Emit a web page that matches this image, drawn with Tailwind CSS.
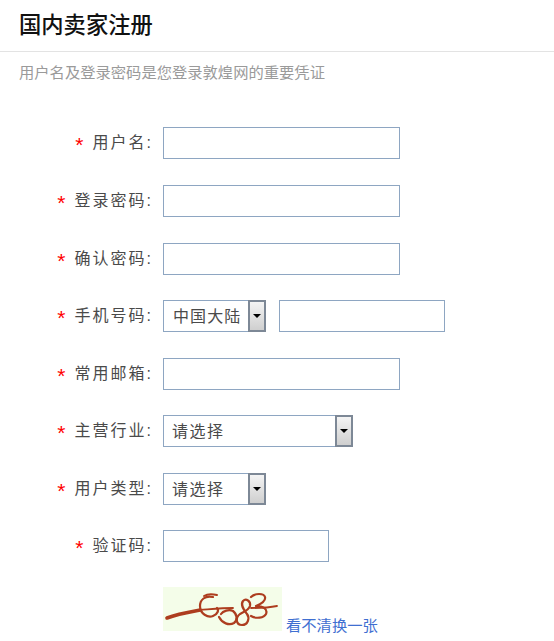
<!DOCTYPE html>
<html lang="zh-CN">
<head>
<meta charset="UTF-8">
<title>国内卖家注册</title>
<script src="https://cdn.jsdelivr.net/npm/@tailwindcss/browser@4"></script>
</head>
<body class="bg-white overflow-hidden font-['Liberation_Sans','Noto_Sans_CJK_SC',sans-serif]">
<div class="w-[554px] h-[641px] overflow-hidden">
  <!-- 标题 -->
  <div class="pl-[19px] pt-[10px] h-[52px] border-b border-[#e3e3e3]">
    <h1 class="text-[22.3px] leading-[32px] font-medium text-[#111]">国内卖家注册</h1>
  </div>
  <p class="pl-[19px] pt-[10px] text-[15.3px] leading-[22px] text-[#9a9a9a]">用户名及登录密码是您登录敦煌网的重要凭证</p>

  <form class="mt-[43.45px] flex flex-col gap-[25.55px]">
    <div class="flex items-center h-[32px]">
      <label class="w-[153px] text-right text-[16px] tracking-[2px] text-[#4a4a4a]"><span class="text-[#f00] text-[21px] leading-none align-[-4px] mr-[7px]">*</span>用户名:</label>
      <input class="ml-[10px] w-[237px] h-[32px] bg-white border border-[#8ea6c2]">
    </div>
    <div class="flex items-center h-[32px]">
      <label class="w-[153px] text-right text-[16px] tracking-[2px] text-[#4a4a4a]"><span class="text-[#f00] text-[21px] leading-none align-[-4px] mr-[7px]">*</span>登录密码:</label>
      <input type="password" class="ml-[10px] w-[237px] h-[32px] bg-white border border-[#8ea6c2]">
    </div>
    <div class="flex items-center h-[32px]">
      <label class="w-[153px] text-right text-[16px] tracking-[2px] text-[#4a4a4a]"><span class="text-[#f00] text-[21px] leading-none align-[-4px] mr-[7px]">*</span>确认密码:</label>
      <input type="password" class="ml-[10px] w-[237px] h-[32px] bg-white border border-[#8ea6c2]">
    </div>
    <div class="flex items-center h-[32px]">
      <label class="w-[153px] text-right text-[16px] tracking-[2px] text-[#4a4a4a]"><span class="text-[#f00] text-[21px] leading-none align-[-4px] mr-[7px]">*</span>手机号码:</label>
      <div class="relative ml-[10px] w-[103px] h-[32px] border border-[#8ea6c2] flex items-center pl-[9px] pt-[2px] text-[16px] tracking-[1.1px] text-[#4a4a4a]">
        中国大陆
        <span class="absolute right-[-1px] top-[-1px] w-[18px] h-[32px] border-2 border-[#7d8896] bg-gradient-to-b from-[#f4f4f4] to-[#cfcfcf] flex items-center justify-center">
          <span class="w-0 h-0 border-x-[4px] border-x-transparent border-t-[4px] border-t-black"></span>
        </span>
      </div>
      <input class="ml-[13px] w-[166px] h-[32px] bg-white border border-[#8ea6c2]">
    </div>
    <div class="flex items-center h-[32px]">
      <label class="w-[153px] text-right text-[16px] tracking-[2px] text-[#4a4a4a]"><span class="text-[#f00] text-[21px] leading-none align-[-4px] mr-[7px]">*</span>常用邮箱:</label>
      <input class="ml-[10px] w-[237px] h-[32px] bg-white border border-[#8ea6c2]">
    </div>
    <div class="flex items-center h-[32px]">
      <label class="w-[153px] text-right text-[16px] tracking-[2px] text-[#4a4a4a]"><span class="text-[#f00] text-[21px] leading-none align-[-4px] mr-[7px]">*</span>主营行业:</label>
      <div class="relative ml-[10px] w-[190px] h-[32px] border border-[#8ea6c2] flex items-center pl-[8px] pt-[2px] text-[16px] tracking-[1.5px] text-[#4a4a4a]">
        请选择
        <span class="absolute right-[-1px] top-[-1px] w-[18px] h-[32px] border-2 border-[#7d8896] bg-gradient-to-b from-[#f4f4f4] to-[#cfcfcf] flex items-center justify-center">
          <span class="w-0 h-0 border-x-[4px] border-x-transparent border-t-[4px] border-t-black"></span>
        </span>
      </div>
    </div>
    <div class="flex items-center h-[32px]">
      <label class="w-[153px] text-right text-[16px] tracking-[2px] text-[#4a4a4a]"><span class="text-[#f00] text-[21px] leading-none align-[-4px] mr-[7px]">*</span>用户类型:</label>
      <div class="relative ml-[10px] w-[103px] h-[32px] border border-[#8ea6c2] flex items-center pl-[8px] pt-[2px] text-[16px] tracking-[1.5px] text-[#4a4a4a]">
        请选择
        <span class="absolute right-[-1px] top-[-1px] w-[18px] h-[32px] border-2 border-[#7d8896] bg-gradient-to-b from-[#f4f4f4] to-[#cfcfcf] flex items-center justify-center">
          <span class="w-0 h-0 border-x-[4px] border-x-transparent border-t-[4px] border-t-black"></span>
        </span>
      </div>
    </div>
    <div class="flex items-center h-[32px]">
      <label class="w-[153px] text-right text-[16px] tracking-[2px] text-[#4a4a4a]"><span class="text-[#f00] text-[21px] leading-none align-[-4px] mr-[7px]">*</span>验证码:</label>
      <input class="ml-[10px] w-[166px] h-[32px] bg-white border border-[#8ea6c2]">
    </div>
  </form>

  <!-- 验证码图片 -->
  <div class="mt-[25px] ml-[163px] flex items-end gap-[4px]">
    <svg class="w-[119px] h-[44px] bg-[#f4fde9]" viewBox="0 0 119 44" fill="none" stroke="#ad3d1f" stroke-width="2.2" stroke-linecap="round" stroke-linejoin="round">
      <path d="M4 31C14 27 26 25 37 23" stroke-width="3.6"/>
      <path d="M37 23C50 22 60 21 70 21M88 21C96 21 104 21 114 19" stroke-width="1.8"/>
      <path d="M50 10C42 8 37 13 37 19C37 27 45 31 50 29C55 27 56 23 54 21"/>
      <path d="M41 9C44 7 50 7 54 8" stroke-width="2"/>
      <path d="M56 30C59 36 66 39 71 36C75 33 74 27 70 24C66 22 60 24 58 27"/>
      <path d="M77 27C72 31 73 38 79 38C85 38 87 31 84 27C81 23 77 18 80 14C83 11 88 14 87 19C86 23 81 25 77 27Z"/>
      <path d="M88 10C92 6 101 6 102 10C103 14 98 17 93 19C100 19 105 22 103 27C101 31 93 32 88 29"/>
    </svg>
    <a href="#" class="text-[15.3px] leading-[18px] mb-[-4px] text-[#3f6fd1]">看不清换一张</a>
  </div>
</div>
</body>
</html>
